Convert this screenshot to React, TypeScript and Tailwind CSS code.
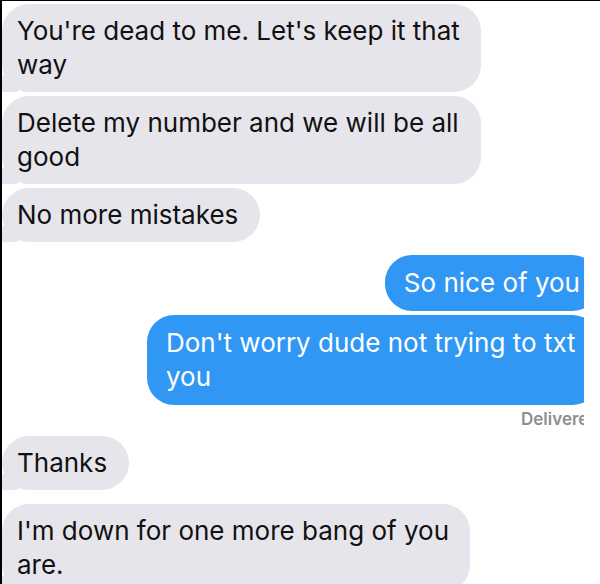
import React from "react";

type Msg = { text: React.ReactNode; mine?: boolean; className?: string };

const font = { fontFamily: "Inter, 'Liberation Sans', sans-serif" };

const Bubble = ({ text, mine, className = "" }: Msg) => {
  if (mine) {
    return (
      <div
        className={`self-end whitespace-nowrap rounded-[27px] bg-[#3197f5] pl-[19px] pr-[19px] py-[11px] text-[26px] leading-[34px] text-white ${className}`}
      >
        {text}
      </div>
    );
  }
  return (
    <div className={`relative self-start ${className}`}>
      <div className="absolute bottom-0 left-0 h-[16px] w-[16px] bg-[#e6e5eb]" />
      <div className="relative whitespace-nowrap rounded-[27px] bg-[#e6e5eb] pl-[15px] pr-[22px] py-[10px] text-[26px] leading-[34px] text-[#111]">
        {text}
      </div>
    </div>
  );
};

export default function App() {
  return (
    <div
      className="h-[584px] w-[600px] overflow-hidden border-l-2 border-t border-black bg-white"
      style={font}
    >
      <div className="h-full w-[582px] overflow-hidden">
        <div className="flex w-[597px] flex-col pt-[3px]">
          <Bubble
            className="w-[479px]"
            text={
              <>
                You're dead to me. Let's keep it that
                <br />
                way
              </>
            }
          />
          <Bubble
            className="mt-[4px] w-[479px]"
            text={
              <>
                Delete my number and we will be all
                <br />
                good
              </>
            }
          />
          <Bubble className="mt-[4px]" text="No more mistakes" />
          <Bubble mine className="mt-[13px]" text="So nice of you" />
          <Bubble
            mine
            className="mt-[4px] w-[452px]"
            text={
              <>
                Don't worry dude not trying to txt
                <br />
                you
              </>
            }
          />
          <div className="mt-[4px] self-end pl-[4px] text-[17px] font-semibold leading-[20px] text-[#8e8e93]">
            Delivered
          </div>
          <Bubble className="mt-[7px]" text="Thanks" />
          <Bubble
            className="mt-[14px] w-[468px]"
            text={
              <>
                I'm down for one more bang of you
                <br />
                are.
              </>
            }
          />
        </div>
      </div>
    </div>
  );
}
